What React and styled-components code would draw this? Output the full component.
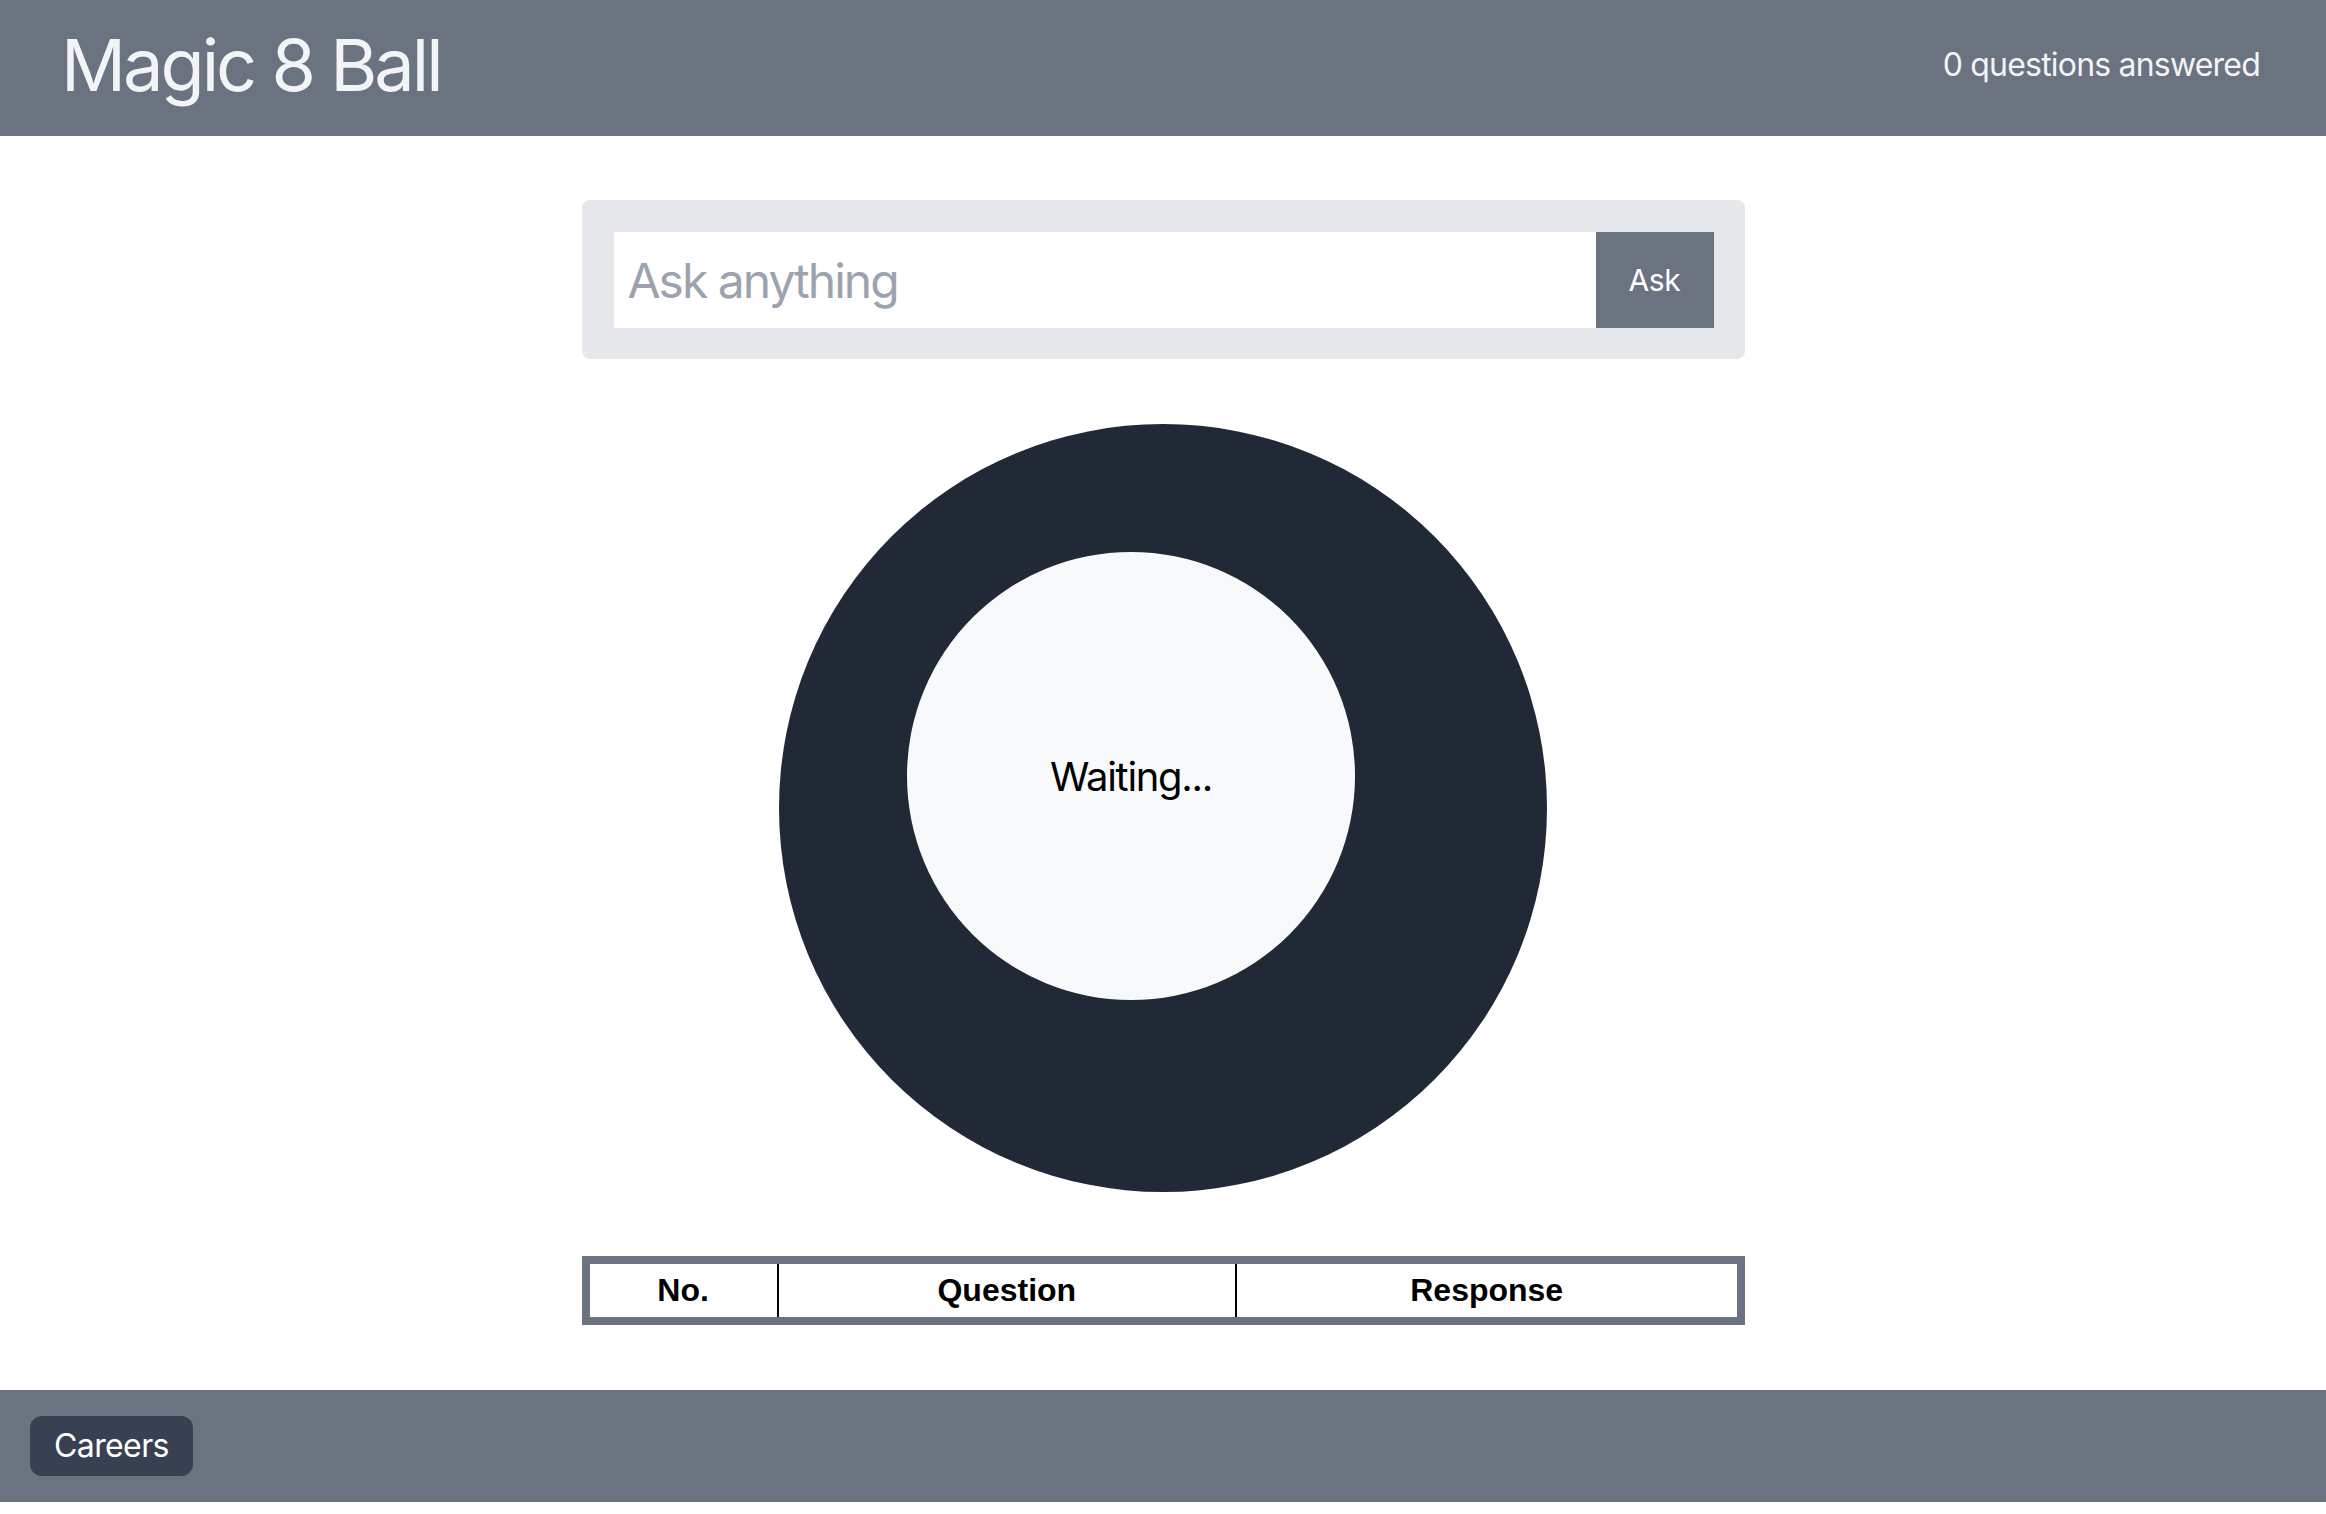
import React from "react";
import styled, { createGlobalStyle } from "styled-components";

const GlobalStyle = createGlobalStyle`
  html, body { margin: 0; padding: 0; background: #ffffff; }
  body { font-family: Inter, "Noto Sans", sans-serif; color: #000; }
  * { box-sizing: border-box; }
`;

const Page = styled.div`
  display: flex;
  flex-direction: column;
  min-height: 1500px;
`;

const Header = styled.header`
  display: flex;
  align-items: center;
  justify-content: space-between;
  height: 136px;
  padding: 0 66px 0 61px;
  background: #6b7280;
  color: #f3f4f6;
`;

const Title = styled.h1`
  margin: 0;
  font-size: 72px;
  font-weight: 400;
  line-height: 80px;
  letter-spacing: -3px;
  transform: translateY(-3px);
`;

const Counter = styled.div`
  font-size: 32px;
  line-height: 48px;
  letter-spacing: -0.8px;
  transform: translateY(-3px);
`;

const Main = styled.main`
  flex: 1;
  display: flex;
  flex-direction: column;
  align-items: center;
  padding: 64px 0 65px;
`;

const AskCard = styled.form`
  display: flex;
  width: 1163px;
  margin: 0 0 65px;
  padding: 32px 31px 31px 32px;
  background: #e5e7eb;
  border-radius: 8px;
`;

const AskInput = styled.input`
  flex: 1;
  min-width: 0;
  height: 96px;
  padding: 16px 14px;
  border: none;
  outline: none;
  background: #ffffff;
  font-family: inherit;
  font-size: 48px;
  line-height: 64px;
  color: #111827;
  letter-spacing: -2px;
  &::placeholder { color: #9ca3af; }
`;

const AskButton = styled.button`
  width: 118px;
  height: 96px;
  border: none;
  background: #6b7280;
  color: #ffffff;
  font-family: inherit;
  font-size: 30px;
  letter-spacing: -0.3px;
  padding: 0;
`;

const Ball = styled.div`
  width: 768px;
  height: 768px;
  margin: 0 0 64px;
  padding: 128px;
  border-radius: 50%;
  background: #222936;
`;

const Window = styled.div`
  width: 448px;
  height: 448px;
  border-radius: 50%;
  background: #f8f9fb;
  display: flex;
  align-items: center;
  justify-content: center;
  font-size: 40px;
  line-height: 56px;
  letter-spacing: -1.3px;
  color: #000;
  padding-top: 2px;
`;

const History = styled.table`
  width: 1163px;
  border: 8px solid #6b7280;
  border-spacing: 0;
  font-family: "Liberation Sans", Arial, sans-serif;
`;

const HeadCell = styled.th`
  padding: 2px 5px 3px;
  font-size: 32px;
  line-height: 48px;
  font-weight: 700;
  text-align: center;
  & + & { border-left: 2px solid #000; }
`;

const Footer = styled.footer`
  display: flex;
  align-items: center;
  height: 112px;
  padding: 0 30px;
  background: #6b7280;
`;

const CareersButton = styled.button`
  height: 60px;
  padding: 0 24px;
  border: none;
  border-radius: 12px;
  background: #374151;
  color: #ffffff;
  font-family: Inter, "Noto Sans", sans-serif;
  font-size: 32px;
  line-height: 48px;
  letter-spacing: -0.6px;
`;

export default function App() {
  return (
    <Page>
      <GlobalStyle />
      <Header>
        <Title>Magic 8 Ball</Title>
        <Counter>0 questions answered</Counter>
      </Header>
      <Main>
        <AskCard onSubmit={(e) => e.preventDefault()}>
          <AskInput placeholder="Ask anything" />
          <AskButton type="submit">Ask</AskButton>
        </AskCard>
        <Ball>
          <Window>Waiting...</Window>
        </Ball>
        <History>
          <thead>
            <tr>
              <HeadCell>No.</HeadCell>
              <HeadCell>Question</HeadCell>
              <HeadCell>Response</HeadCell>
            </tr>
          </thead>
        </History>
      </Main>
      <Footer>
        <CareersButton type="button">Careers</CareersButton>
      </Footer>
    </Page>
  );
}
